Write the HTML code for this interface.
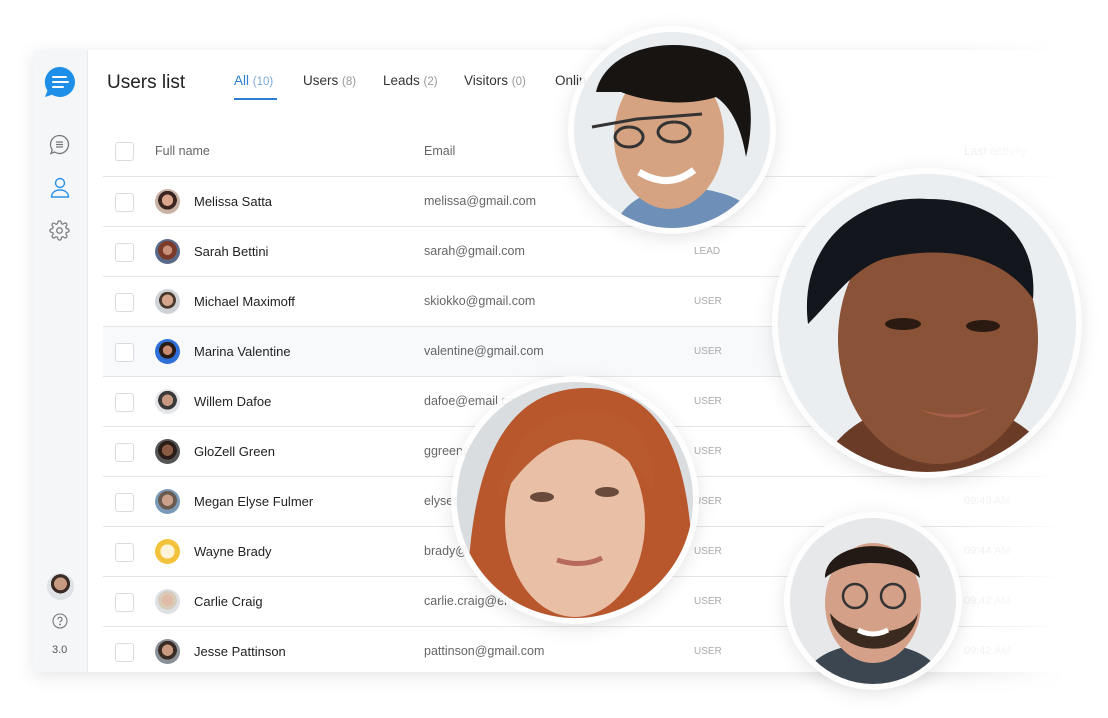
<!DOCTYPE html>
<html><head><meta charset="utf-8"><style>
*{margin:0;padding:0;box-sizing:border-box}
body{width:1108px;height:718px;background:#fff;position:relative;overflow:hidden;font-family:"Liberation Sans",sans-serif;color:#222}
.card{position:absolute;left:33px;top:50px;width:1060px;height:622px;background:#fff;box-shadow:0 4px 18px rgba(0,0,0,.10);border-radius:4px;overflow:hidden}
.fadeo{position:absolute;left:960px;top:30px;width:148px;height:670px;background:linear-gradient(90deg,rgba(255,255,255,0),#fff 70%)}
.side{position:absolute;left:0;top:0;width:55px;height:100%;background:#f4f6f8;border-right:1px solid #e8ebee}
.abs{position:absolute}
.title{left:74px;top:22px;font-size:19px;color:#222}
.tab{top:23px;font-size:13.5px;color:#333}
.tab span{color:#999;font-size:11.5px}
.cb{position:absolute;width:19px;height:19px;border:1px solid #d8dbdf;border-radius:3px;background:#fff}
.row{position:absolute;left:70px;width:990px;height:50px;border-top:1px solid #e4e6e9}
.nm{position:absolute;left:91px;top:17px;font-size:13px;color:#222}
.em{position:absolute;left:321px;top:17px;font-size:12.5px;color:#666}
.ty{position:absolute;left:591px;top:19px;font-size:10px;color:#aaa}
.tm{position:absolute;left:861px;top:18px;font-size:11px;color:#eee}
.av{position:absolute;left:52px;top:12px;width:25px;height:25px;border-radius:50%}
.ph{position:absolute;border-radius:50%;overflow:hidden;box-shadow:0 0 0 6px rgba(255,255,255,.9),0 4px 24px rgba(0,0,0,.18)}
</style></head><body>
<div class="card">
 <div class="side">
  <svg class="abs" style="left:11px;top:16px" width="32" height="32" viewBox="0 0 32 32"><path d="M16 1a15 15 0 1 1-8 27.7L1 31l2.5-6.5A15 15 0 0 1 16 1z" fill="#1d8fe8"/><path d="M9 11h13M9 16h15M9 21h10" stroke="#fff" stroke-width="2" stroke-linecap="round"/></svg>
  <svg class="abs" style="left:16px;top:84px" width="21" height="21" viewBox="0 0 21 21" fill="none" stroke="#777" stroke-width="1.3"><path d="M10.5 1.5a9 9 0 1 1-5 16.5L2 19.5l1.3-3.6A9 9 0 0 1 10.5 1.5z"/><path d="M7 8h7M7 10.5h7M7 13h7"/></svg>
  <svg class="abs" style="left:17px;top:127px" width="20" height="21" viewBox="0 0 20 21" fill="none" stroke="#2c93e6" stroke-width="1.4"><circle cx="10" cy="6" r="4.5"/><path d="M1.5 20c0-4.5 3.8-7 8.5-7s8.5 2.5 8.5 7z"/></svg>
  <svg class="abs" style="left:16px;top:170px" width="21" height="21" viewBox="0 0 24 24" fill="none" stroke="#777" stroke-width="1.4"><circle cx="12" cy="12" r="3.2"/><path d="M19.4 15a1.7 1.7 0 0 0 .3 1.8l.1.1a2 2 0 1 1-2.8 2.8l-.1-.1a1.7 1.7 0 0 0-1.8-.3 1.7 1.7 0 0 0-1 1.5V21a2 2 0 1 1-4 0v-.1a1.7 1.7 0 0 0-1.1-1.5 1.7 1.7 0 0 0-1.8.3l-.1.1a2 2 0 1 1-2.8-2.8l.1-.1a1.7 1.7 0 0 0 .3-1.8 1.7 1.7 0 0 0-1.5-1H3a2 2 0 1 1 0-4h.1a1.7 1.7 0 0 0 1.5-1.100 1.7 1.7 0 0 0-.3-1.8l-.1-.1a2 2 0 1 1 2.8-2.8l.1.1a1.7 1.7 0 0 0 1.8.3H9a1.7 1.7 0 0 0 1-1.5V3a2 2 0 1 1 4 0v.1a1.7 1.7 0 0 0 1 1.5 1.7 1.7 0 0 0 1.8-.3l.1-.1a2 2 0 1 1 2.8 2.8l-.1.1a1.7 1.7 0 0 0-.3 1.8V9a1.7 1.7 0 0 0 1.5 1H21a2 2 0 1 1 0 4h-.1a1.7 1.7 0 0 0-1.5 1z"/></svg>
  <div class="abs" style="left:14px;top:523px;width:27px;height:27px;border-radius:50%;background:radial-gradient(circle at 50% 40%,#c79a82 0 30%,#3b2c25 31% 45%,#dfe3e7 46%)"></div>
  <svg class="abs" style="left:19px;top:563px" width="16" height="16" viewBox="0 0 16 16" fill="none" stroke="#777" stroke-width="1.1"><circle cx="8" cy="8" r="7"/><path d="M6 6.3a2 2 0 1 1 2.7 1.8c-.5.2-.7.6-.7 1.2"/><circle cx="8" cy="11.5" r=".4" fill="#777"/></svg>
  <div class="abs" style="left:19px;top:594px;font-size:11px;color:#555">3.0</div>
 </div>
 <div class="abs title">Users list</div>
 <div class="abs tab" style="left:201px;color:#2c7fd0">All <span style="color:#7aa9d8">(10)</span></div>
 <div class="abs" style="left:201px;top:48px;width:43px;height:2px;background:#2c7fd0"></div>
 <div class="abs tab" style="left:270px">Users <span>(8)</span></div>
 <div class="abs tab" style="left:350px">Leads <span>(2)</span></div>
 <div class="abs tab" style="left:431px">Visitors <span>(0)</span></div>
 <div class="abs tab" style="left:522px">Online</div>
 <div class="cb" style="left:82px;top:92px"></div>
 <div class="abs" style="left:122px;top:94px;font-size:12.5px;color:#666">Full name</div>
 <div class="abs" style="left:391px;top:94px;font-size:12.5px;color:#666">Email</div>
 <div class="abs" style="left:931px;top:94px;font-size:12px;color:#eee">Last activity</div>

 <div class="row" style="top:126px"><div class="cb" style="left:12px;top:16px"></div><div class="av" style="background:radial-gradient(circle at 50% 45%,#d9a48a 0 30%,#3a2520 31% 50%,#c9b2a5 51%)"></div><div class="nm">Melissa Satta</div><div class="em">melissa@gmail.com</div></div>
 <div class="row" style="top:176px"><div class="cb" style="left:12px;top:16px"></div><div class="av" style="background:radial-gradient(circle at 50% 45%,#c89078 0 25%,#7b3a2a 26% 50%,#5a6a8a 51%)"></div><div class="nm">Sarah Bettini</div><div class="em">sarah@gmail.com</div><div class="ty">LEAD</div></div>
 <div class="row" style="top:226px"><div class="cb" style="left:12px;top:16px"></div><div class="av" style="background:radial-gradient(circle at 50% 45%,#d4a58c 0 30%,#4a3a30 31% 45%,#cfd3d8 46%)"></div><div class="nm">Michael Maximoff</div><div class="em">skiokko@gmail.com</div><div class="ty">USER</div></div>
 <div class="row" style="top:276px;background:#f7f9fb"><div class="cb" style="left:12px;top:16px"></div><div class="av" style="background:radial-gradient(circle at 50% 45%,#c88a70 0 25%,#2a1d18 26% 45%,#2f6fd8 46%)"></div><div class="nm">Marina Valentine</div><div class="em">valentine@gmail.com</div><div class="ty">USER</div></div>
 <div class="row" style="top:326px"><div class="cb" style="left:12px;top:16px"></div><div class="av" style="background:radial-gradient(circle at 50% 45%,#c99880 0 30%,#3a3a3a 31% 50%,#e3e5e8 51%)"></div><div class="nm">Willem Dafoe</div><div class="em">dafoe@email.com</div><div class="ty">USER</div></div>
 <div class="row" style="top:376px"><div class="cb" style="left:12px;top:16px"></div><div class="av" style="background:radial-gradient(circle at 50% 45%,#8a5a44 0 30%,#2a1d18 31% 50%,#555 51%)"></div><div class="nm">GloZell Green</div><div class="em">ggreen@gmail.com</div><div class="ty">USER</div></div>
 <div class="row" style="top:426px"><div class="cb" style="left:12px;top:16px"></div><div class="av" style="background:radial-gradient(circle at 50% 45%,#caa08a 0 30%,#6a5a50 31% 50%,#7a9ab8 51%)"></div><div class="nm">Megan Elyse Fulmer</div><div class="em">elyse@gmail.com</div><div class="ty">USER</div><div class="tm">09:49 AM</div></div>
 <div class="row" style="top:476px"><div class="cb" style="left:12px;top:16px"></div><div class="av" style="background:radial-gradient(circle at 50% 50%,#fff4d8 0 40%,#f2c23a 41%)"></div><div class="nm">Wayne Brady</div><div class="em">brady@gmail.com</div><div class="ty">USER</div><div class="tm">09:44 AM</div></div>
 <div class="row" style="top:526px"><div class="cb" style="left:12px;top:16px"></div><div class="av" style="background:radial-gradient(circle at 50% 45%,#e0bca8 0 30%,#d8ccb8 31% 50%,#dde0e4 51%)"></div><div class="nm">Carlie Craig</div><div class="em">carlie.craig@email.com</div><div class="ty">USER</div><div class="tm">09:42 AM</div></div>
 <div class="row" style="top:576px"><div class="cb" style="left:12px;top:16px"></div><div class="av" style="background:radial-gradient(circle at 50% 45%,#c99a80 0 30%,#3a2c24 31% 50%,#8a9098 51%)"></div><div class="nm">Jesse Pattinson</div><div class="em">pattinson@gmail.com</div><div class="ty">USER</div><div class="tm">09:42 AM</div></div>
</div>
<div class="fadeo"></div>

<!-- photo 1 -->
<div class="ph" style="left:574px;top:32px;width:196px;height:196px;background:#e8ecef">
 <svg width="196" height="196" viewBox="0 0 196 196"><rect width="196" height="196" fill="#e9edf0"/><path d="M40 196c10-30 40-40 70-40s70 10 80 40z" fill="#6e8fb8"/><ellipse cx="95" cy="105" rx="55" ry="72" fill="#d6a382"/><path d="M22 60c10-45 80-60 130-35 25 15 30 60 20 100-5-30-15-50-30-60-30 10-70 5-95-5z" fill="#171412"/><path d="M18 95l45-8 40-3 25-2M55 95a14 10 0 1 0 0.1 0M100 90a16 10 0 1 0 0.1 0" stroke="#333" stroke-width="3" fill="none"/><path d="M65 140q30 18 55-2" stroke="#fff" stroke-width="7" fill="none"/></svg>
</div>
<!-- photo 2 -->
<div class="ph" style="left:778px;top:174px;width:298px;height:298px">
 <svg width="298" height="298" viewBox="0 0 298 298"><rect width="298" height="298" fill="#ebeef1"/><path d="M40 298c20-50 70-70 120-70s100 20 120 70z" fill="#6a3c28"/><ellipse cx="160" cy="165" rx="100" ry="125" fill="#8a5236"/><path d="M30 150c-10-80 50-130 120-125 70 0 110 40 105 100-30-45-90-55-150-40-30 10-50 40-75 65z" fill="#14161d"/><ellipse cx="125" cy="150" rx="18" ry="6" fill="#2b1a12"/><ellipse cx="205" cy="152" rx="17" ry="6" fill="#2b1a12"/><path d="M140 235q40 12 70-2q-30 20-70 2z" fill="#a8604a"/></svg>
</div>
<!-- photo 3 -->
<div class="ph" style="left:457px;top:382px;width:236px;height:236px">
 <svg width="236" height="236" viewBox="0 0 236 236"><rect width="236" height="236" fill="#d9dde0"/><path d="M10 236c0-140 30-230 120-230 90 0 110 100 105 230z" fill="#b8562c"/><ellipse cx="118" cy="140" rx="70" ry="95" fill="#e9bfa6"/><path d="M40 120c10-70 60-100 110-90 40 10 50 50 45 80-20-40-60-60-90-50-30 10-50 40-65 60z" fill="#b95a2e"/><ellipse cx="85" cy="115" rx="12" ry="5" fill="#6a4a3a"/><ellipse cx="150" cy="110" rx="12" ry="5" fill="#6a4a3a"/><path d="M100 178q25 8 45-2" stroke="#b86a5a" stroke-width="5" fill="none"/></svg>
</div>
<!-- photo 4 -->
<div class="ph" style="left:790px;top:518px;width:166px;height:166px">
 <svg width="166" height="166" viewBox="0 0 166 166"><rect width="166" height="166" fill="#e6e8ea"/><path d="M10 166c10-30 40-40 73-40s63 10 73 40z" fill="#3c4650"/><ellipse cx="83" cy="85" rx="48" ry="60" fill="#d4a188"/><path d="M35 60c0-40 90-45 95 0-10-10-30-15-48-15s-35 5-47 15z" fill="#231a15"/><path d="M40 95c5 45 80 50 88 0-10 25-70 25-88 0z" fill="#3a2a20"/><circle cx="65" cy="78" r="12" fill="none" stroke="#333" stroke-width="2.5"/><circle cx="103" cy="78" r="12" fill="none" stroke="#333" stroke-width="2.5"/><path d="M68 112q15 8 30 0" stroke="#fff" stroke-width="5" fill="none"/></svg>
</div>
</body></html>
